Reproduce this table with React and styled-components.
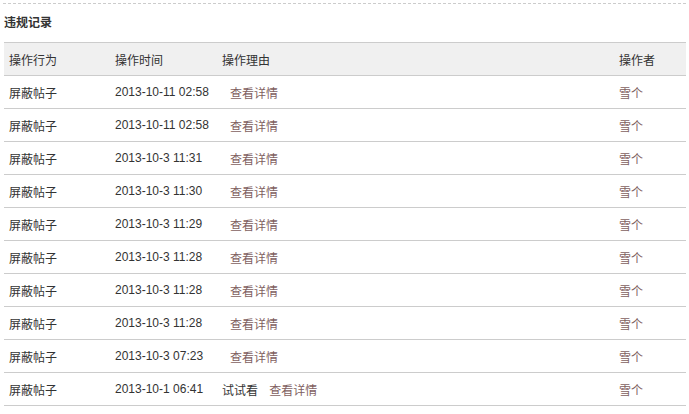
import React from "react";
import styled, { createGlobalStyle } from "styled-components";

const records = [
  { action: "屏蔽帖子", time: "2013-10-11 02:58", reason: "", operator: "雪个" },
  { action: "屏蔽帖子", time: "2013-10-11 02:58", reason: "", operator: "雪个" },
  { action: "屏蔽帖子", time: "2013-10-3 11:31", reason: "", operator: "雪个" },
  { action: "屏蔽帖子", time: "2013-10-3 11:30", reason: "", operator: "雪个" },
  { action: "屏蔽帖子", time: "2013-10-3 11:29", reason: "", operator: "雪个" },
  { action: "屏蔽帖子", time: "2013-10-3 11:28", reason: "", operator: "雪个" },
  { action: "屏蔽帖子", time: "2013-10-3 11:28", reason: "", operator: "雪个" },
  { action: "屏蔽帖子", time: "2013-10-3 11:28", reason: "", operator: "雪个" },
  { action: "屏蔽帖子", time: "2013-10-3 07:23", reason: "", operator: "雪个" },
  { action: "屏蔽帖子", time: "2013-10-1 06:41", reason: "试试看", operator: "雪个" },
];

const columns = [
  { label: "操作行为", width: 106 },
  { label: "操作时间", width: 107 },
  { label: "操作理由", width: 397 },
  { label: "操作者", width: 72 },
];

function App() {
  return (
    <>
      <GlobalStyle />
      <Panel>
        <Title>违规记录</Title>
        <Table>
          <colgroup>
            {columns.map((c) => (
              <col key={c.label} style={{ width: c.width }} />
            ))}
          </colgroup>
          <thead>
            <tr>
              {columns.map((c) => (
                <HeadCell key={c.label}>{c.label}</HeadCell>
              ))}
            </tr>
          </thead>
          <tbody>
            {records.map((r, i) => (
              <tr key={i}>
                <Cell>{r.action}</Cell>
                <Cell>{r.time}</Cell>
                <Cell>
                  {r.reason} <DetailLink href="#">查看详情</DetailLink>
                </Cell>
                <Cell>
                  <UserLink href="#">{r.operator}</UserLink>
                </Cell>
              </tr>
            ))}
          </tbody>
        </Table>
      </Panel>
    </>
  );
}

export default App;

const GlobalStyle = createGlobalStyle`
  body {
    margin: 0;
    background: #fff;
    font-family: "Liberation Sans", "Noto Sans CJK SC", sans-serif;
    font-size: 12px;
    color: #333;
  }
`;

const Panel = styled.div`
  margin: 3px 3px 0;
  border-top: 1px dashed #ccc;
  padding: 0 0 0 1px;
`;

const Title = styled.h3`
  margin: 0;
  height: 38px;
  line-height: 38px;
  font-size: 12px;
  font-weight: 700;
  color: #333;
`;

const Table = styled.table`
  width: 682px;
  border-collapse: collapse;
  table-layout: fixed;
`;

const HeadCell = styled.th`
  height: 32px;
  padding: 0 0 0 5px;
  text-align: left;
  font-weight: 400;
  color: #333;
  background: #f0f0f0;
  border-top: 1px solid #ccc;
  border-bottom: 1px solid #ccc;
`;

const Cell = styled.td`
  height: 32px;
  padding: 0 0 0 5px;
  color: #333;
  border-bottom: 1px solid #ccc;
  white-space: nowrap;
`;

const DetailLink = styled.a`
  margin-left: 8px;
  color: #7f5f5f;
  text-decoration: none;
`;

const UserLink = styled.a`
  color: #7f5f5f;
  text-decoration: none;
`;
